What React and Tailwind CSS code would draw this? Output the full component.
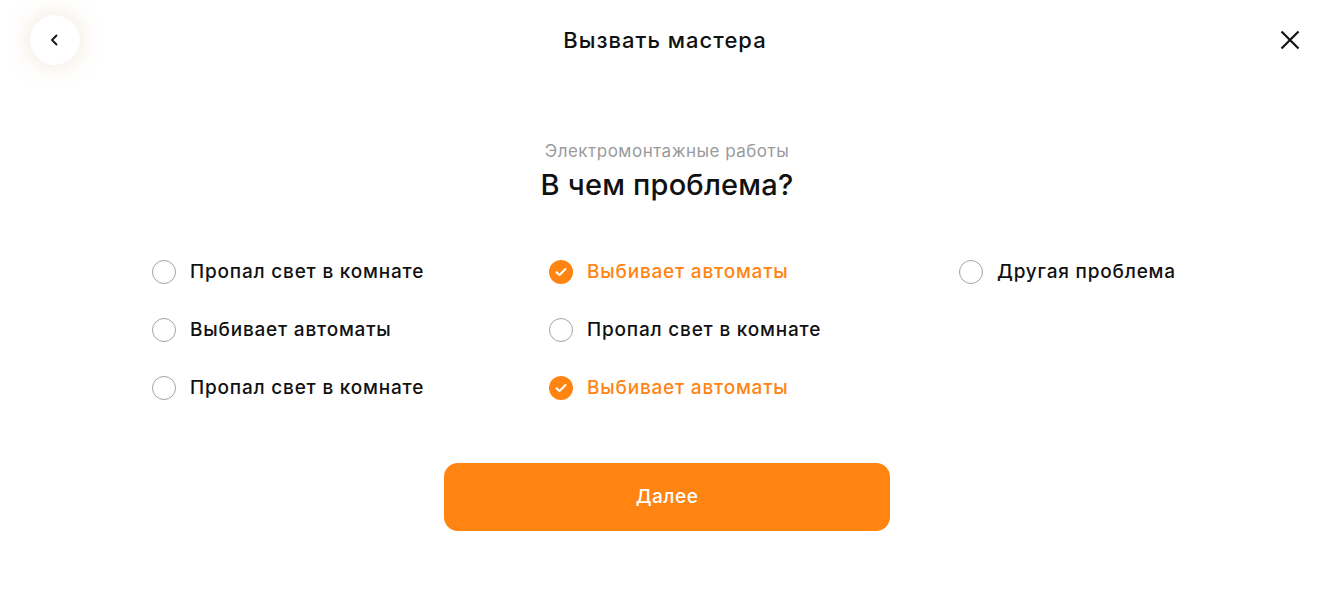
import React, { useState } from 'react';

const options = [
  [
    { id: 'a1', label: 'Пропал свет в комнате' },
    { id: 'a2', label: 'Выбивает автоматы' },
    { id: 'a3', label: 'Пропал свет в комнате' },
  ],
  [
    { id: 'b1', label: 'Выбивает автоматы' },
    { id: 'b2', label: 'Пропал свет в комнате' },
    { id: 'b3', label: 'Выбивает автоматы' },
  ],
  [{ id: 'c1', label: 'Другая проблема' }],
];

const columnWidths = ['w-[397px]', 'w-[410px]', 'w-[240px]'];

const Option = ({ label, checked, onToggle }) => (
  <button
    type="button"
    onClick={onToggle}
    className="flex items-center gap-[14px] h-[24px] text-left bg-transparent"
  >
    {checked ? (
      <span className="w-[24px] h-[24px] rounded-full bg-[#ff8411] flex items-center justify-center shrink-0">
        <svg width="12" height="10" viewBox="0 0 12 10" fill="none">
          <path d="M1.5 5.2L4.5 8L10.5 2" stroke="white" strokeWidth="2" strokeLinecap="round" strokeLinejoin="round" />
        </svg>
      </span>
    ) : (
      <span className="w-[24px] h-[24px] rounded-full border-[1.5px] border-[#a3a3a3] shrink-0" />
    )}
    <span className={`text-[19px] font-medium tracking-[0.8px] ${checked ? 'text-[#ff8411]' : 'text-[#111]'}`}>
      {label}
    </span>
  </button>
);

const App = () => {
  const [selected, setSelected] = useState({ b1: true, b3: true });

  const toggle = (id) => setSelected({ ...selected, [id]: !selected[id] });

  return (
    <div className="w-[1340px] h-[610px] bg-white flex flex-col" style={{ fontFamily: 'Inter, "Noto Sans", sans-serif' }}>
      {/* Header */}
      <div className="flex items-center pl-[30px] pr-[40px] pt-[15px] h-[65px]">
        <div className="flex-1 flex">
          <button
            type="button"
            className="w-[50px] h-[50px] rounded-full bg-white flex items-center justify-center shadow-[0_0_22px_rgba(214,180,130,0.35)]"
          >
            <svg width="14" height="14" viewBox="0 0 14 14" fill="none">
              <path d="M8.5 2.5L4 7L8.5 11.5" stroke="#111" strokeWidth="1.8" strokeLinecap="round" strokeLinejoin="round" />
            </svg>
          </button>
        </div>
        <h1 className="text-[22px] font-medium text-[#111] tracking-[1px]">Вызвать мастера</h1>
        <div className="flex-1 flex justify-end">
          <button type="button" className="w-[20px] h-[20px] flex items-center justify-center">
            <svg width="20" height="20" viewBox="0 0 20 20" fill="none">
              <path d="M1.5 1.5L18.5 18.5M18.5 1.5L1.5 18.5" stroke="#111" strokeWidth="2.2" />
            </svg>
          </button>
        </div>
      </div>

      {/* Title */}
      <div className="flex flex-col items-center mt-[76px] pr-[6px]">
        <p className="text-[17px] text-[#9a9a9a] leading-[20px] tracking-[0.5px]">Электромонтажные работы</p>
        <h2 className="text-[29px] font-medium text-[#111] leading-[36px] mt-[6px] tracking-[0.2px]">В чем проблема?</h2>
      </div>

      {/* Options */}
      <div className="flex pl-[152px] mt-[57px]">
        {options.map((col, ci) => (
          <div key={ci} className={`${columnWidths[ci]} flex flex-col gap-[34px]`}>
            {col.map((o) => (
              <Option key={o.id} label={o.label} checked={!!selected[o.id]} onToggle={() => toggle(o.id)} />
            ))}
          </div>
        ))}
      </div>

      {/* Submit */}
      <div className="flex justify-center mt-[63px] pr-[6px]">
        <button
          type="button"
          className="w-[446px] h-[68px] rounded-[14px] bg-[#ff8411] text-white text-[19px] font-medium tracking-[0.5px]"
        >
          Далее
        </button>
      </div>
    </div>
  );
};

export default App;
